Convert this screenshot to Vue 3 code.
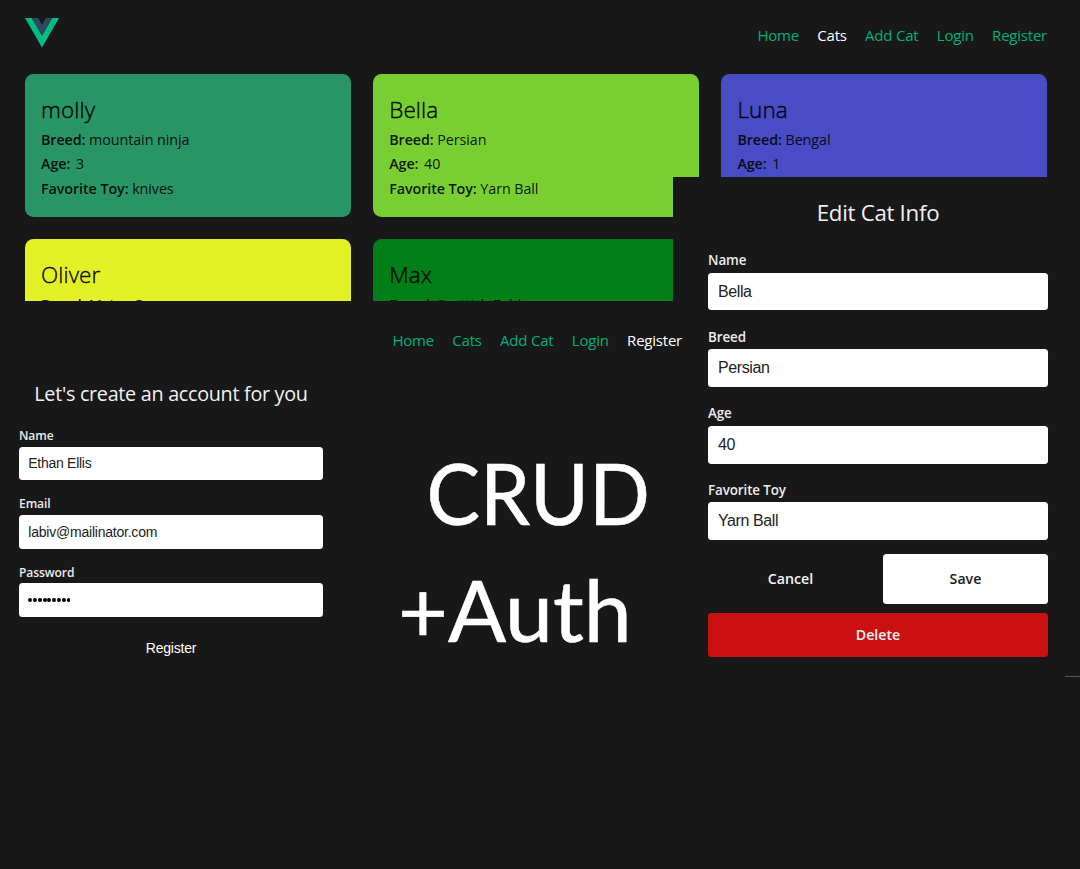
<script setup>
const links = [
  { key: 'home', label: 'Home' },
  { key: 'cats', label: 'Cats' },
  { key: 'add', label: 'Add Cat' },
  { key: 'login', label: 'Login' },
  { key: 'register', label: 'Register' }
]

const cats = [
  { name: 'molly', breed: 'mountain ninja', age: 3, toy: 'knives', tone: 'teal' },
  { name: 'Bella', breed: 'Persian', age: 40, toy: 'Yarn Ball', tone: 'lime' },
  { name: 'Luna', breed: 'Bengal', age: 1, toy: '', tone: 'indigo' },
  { name: 'Oliver', breed: 'Maine Coon', age: '', toy: '', tone: 'yellow' },
  { name: 'Max', breed: 'Scottish Fold', age: '', toy: '', tone: 'green' }
]

const editFields = [
  { label: 'Name', value: 'Bella' },
  { label: 'Breed', value: 'Persian' },
  { label: 'Age', value: '40' },
  { label: 'Favorite Toy', value: 'Yarn Ball' }
]
</script>

<template>
  <div class="page">
    <section class="gallery">
      <header class="topbar">
        <svg class="logo" viewBox="0 0 34 29.5">
          <path d="M0 0H6.8L17 17.6L27.2 0H34L17 29.5Z" fill="#00bd87" />
          <path d="M6.8 0H13.1L17 6.7L20.9 0H27.2L17 17.6Z" fill="#2f495e" />
        </svg>
        <nav class="nav">
          <a v-for="l in links" :key="l.key" :class="['link', { active: l.key === 'cats' }]">{{ l.label }}</a>
        </nav>
      </header>
      <div class="grid">
        <article v-for="c in cats" :key="c.name" :class="['card', c.tone]">
          <h2>{{ c.name }}</h2>
          <p><b>Breed:</b> {{ c.breed }}</p>
          <p v-if="c.age"><b class="age">Age:</b> {{ c.age }}</p>
          <p v-if="c.toy"><b>Favorite Toy:</b> {{ c.toy }}</p>
        </article>
      </div>
    </section>

    <section class="signup">
      <nav class="nav">
        <a v-for="l in links" :key="l.key" :class="['link', { active: l.key === 'register' }]">{{ l.label }}</a>
      </nav>
      <div class="columns">
        <form class="account">
          <h1>Let's create an account for you</h1>
          <label>Name</label>
          <div class="input tight"><span>Ethan Ellis</span></div>
          <label>Email</label>
          <div class="input"><span>labiv@mailinator.com</span></div>
          <label>Password</label>
          <div class="input"><i v-for="n in 9" :key="n" class="dot"></i></div>
          <div class="submit">Register</div>
        </form>
        <div class="caption">
          <div class="crud">CRUD</div>
          <div class="auth">+Auth</div>
        </div>
      </div>
    </section>

    <section class="edit">
      <h1>Edit Cat Info</h1>
      <template v-for="f in editFields" :key="f.label">
        <label>{{ f.label }}</label>
        <div class="input"><span>{{ f.value }}</span></div>
      </template>
      <div class="actions">
        <div class="btn cancel">Cancel</div>
        <div class="btn save">Save</div>
      </div>
      <div class="btn delete">Delete</div>
    </section>
    <div class="rule"></div>
  </div>
</template>

<style>
body {
  margin: 0;
  background: #181818;
}
</style>

<style scoped>
.page {
  position: relative;
  width: 1080px;
  height: 869px;
  overflow: hidden;
  background: #181818;
  font-family: "Open Sans", "Noto Sans", sans-serif;
}
h1, h2, p {
  margin: 0;
  font-weight: 400;
}
.gallery {
  box-sizing: border-box;
  height: 301px;
  padding: 0 32.5px 0 24.5px;
  overflow: hidden;
}
.topbar {
  display: flex;
  justify-content: space-between;
  align-items: flex-start;
  height: 74px;
}
.logo {
  width: 34px;
  height: 29.5px;
  margin-top: 18px;
}
.nav {
  display: flex;
  justify-content: flex-end;
  gap: 18.4px;
}
.topbar .nav {
  padding-top: 23px;
}
.link {
  font-size: 15px;
  line-height: 24px;
  letter-spacing: -0.22px;
  white-space: nowrap;
  color: #00b07a;
}
.topbar .link {
  position: relative;
  left: -0.5px;
}
.link.active {
  color: #fff;
}
.grid {
  display: grid;
  grid-template-columns: repeat(3, 326.4px);
  grid-auto-rows: 143.3px;
  gap: 22px 21.8px;
}
.card {
  box-sizing: border-box;
  padding: 18px 16.5px;
  border-radius: 8.5px;
  color: rgba(0, 0, 0, 0.9);
  white-space: nowrap;
}
.card h2 {
  height: 35.8px;
  font-size: 22.5px;
  font-weight: 300;
  line-height: 36px;
  letter-spacing: 0.1px;
  -webkit-text-stroke: 0.45px;
}
.card p {
  font-size: 14.3px;
  line-height: 24.4px;
  letter-spacing: -0.07px;
}
.card b {
  font-weight: 600;
}
.card .age {
  margin-right: 2px;
}
.teal { background: #299466; }
.lime { background: #79cf32; }
.indigo { background: #484dc5; }
.yellow { background: #e3f026; }
.green { background: #007f18; }

.signup {
  height: 376px;
}
.signup .nav {
  position: relative;
  z-index: 1;
  width: 682px;
  padding-top: 27px;
}
.columns {
  display: flex;
}
.account {
  width: 304px;
  padding: 28px 0 0 19px;
}
.account h1 {
  height: 48px;
  font-size: 19.8px;
  line-height: 28px;
  letter-spacing: -0.3px;
  text-align: center;
  white-space: nowrap;
  color: #f1f1f1;
}
label {
  display: block;
  font-weight: 600;
  color: #ebebeb;
}
.account label {
  height: 18.8px;
  font-size: 12.1px;
  line-height: 16px;
  letter-spacing: -0.1px;
}
.input {
  display: flex;
  align-items: center;
  box-sizing: border-box;
  border-radius: 3.5px;
  background: #fff;
  color: #222;
  font-family: "Liberation Sans", sans-serif;
}
.account .input {
  height: 33.7px;
  margin-bottom: 15.8px;
  padding: 0 0 0.5px 9.3px;
  font-size: 14px;
  letter-spacing: -0.22px;
}
.account .tight {
  letter-spacing: -0.28px;
}
.dot {
  width: 3.9px;
  height: 3.9px;
  margin-right: 0.9px;
  border-radius: 50%;
  background: #000;
}
.submit {
  padding-top: 6px;
  font-family: "Liberation Sans", sans-serif;
  font-size: 14px;
  line-height: 18px;
  letter-spacing: -0.2px;
  text-align: center;
  color: #fff;
}
.caption {
  padding-left: 75px;
  padding-top: 81px;
  font-family: Lato, sans-serif;
  font-size: 86px;
  line-height: 117px;
  color: #fff;
  -webkit-text-stroke: 0.6px #fff;
}
.crud {
  padding-left: 28.5px;
  transform: scaleX(0.932);
  transform-origin: 28.5px 50%;
}
.edit {
  position: absolute;
  left: 673px;
  top: 177px;
  box-sizing: border-box;
  width: 392px;
  height: 499px;
  padding: 19px 17px 0 35px;
  background: #181818;
}
.edit h1 {
  height: 54.3px;
  font-size: 22.3px;
  line-height: 33px;
  letter-spacing: -0.3px;
  text-align: center;
  color: #f1f1f1;
}
.edit label {
  height: 22.4px;
  font-size: 13.4px;
  line-height: 21px;
  letter-spacing: -0.1px;
}
.edit .input {
  height: 37.7px;
  margin-bottom: 16.5px;
  padding-left: 10px;
  font-size: 16px;
  letter-spacing: -0.4px;
}
.actions {
  display: flex;
  gap: 10px;
  margin-top: -2.4px;
}
.btn {
  flex: 1;
  height: 49.3px;
  border-radius: 3.5px;
  font-size: 14.2px;
  font-weight: 600;
  line-height: 49px;
  text-align: center;
  color: #f4f4f4;
}
.save {
  background: #fff;
  color: #181818;
}
.delete {
  height: 43.5px;
  margin-top: 9.5px;
  background: #cb1011;
  line-height: 43.5px;
}
.rule {
  position: absolute;
  left: 1065px;
  top: 676px;
  width: 15px;
  height: 1px;
  background: #555;
}
</style>
